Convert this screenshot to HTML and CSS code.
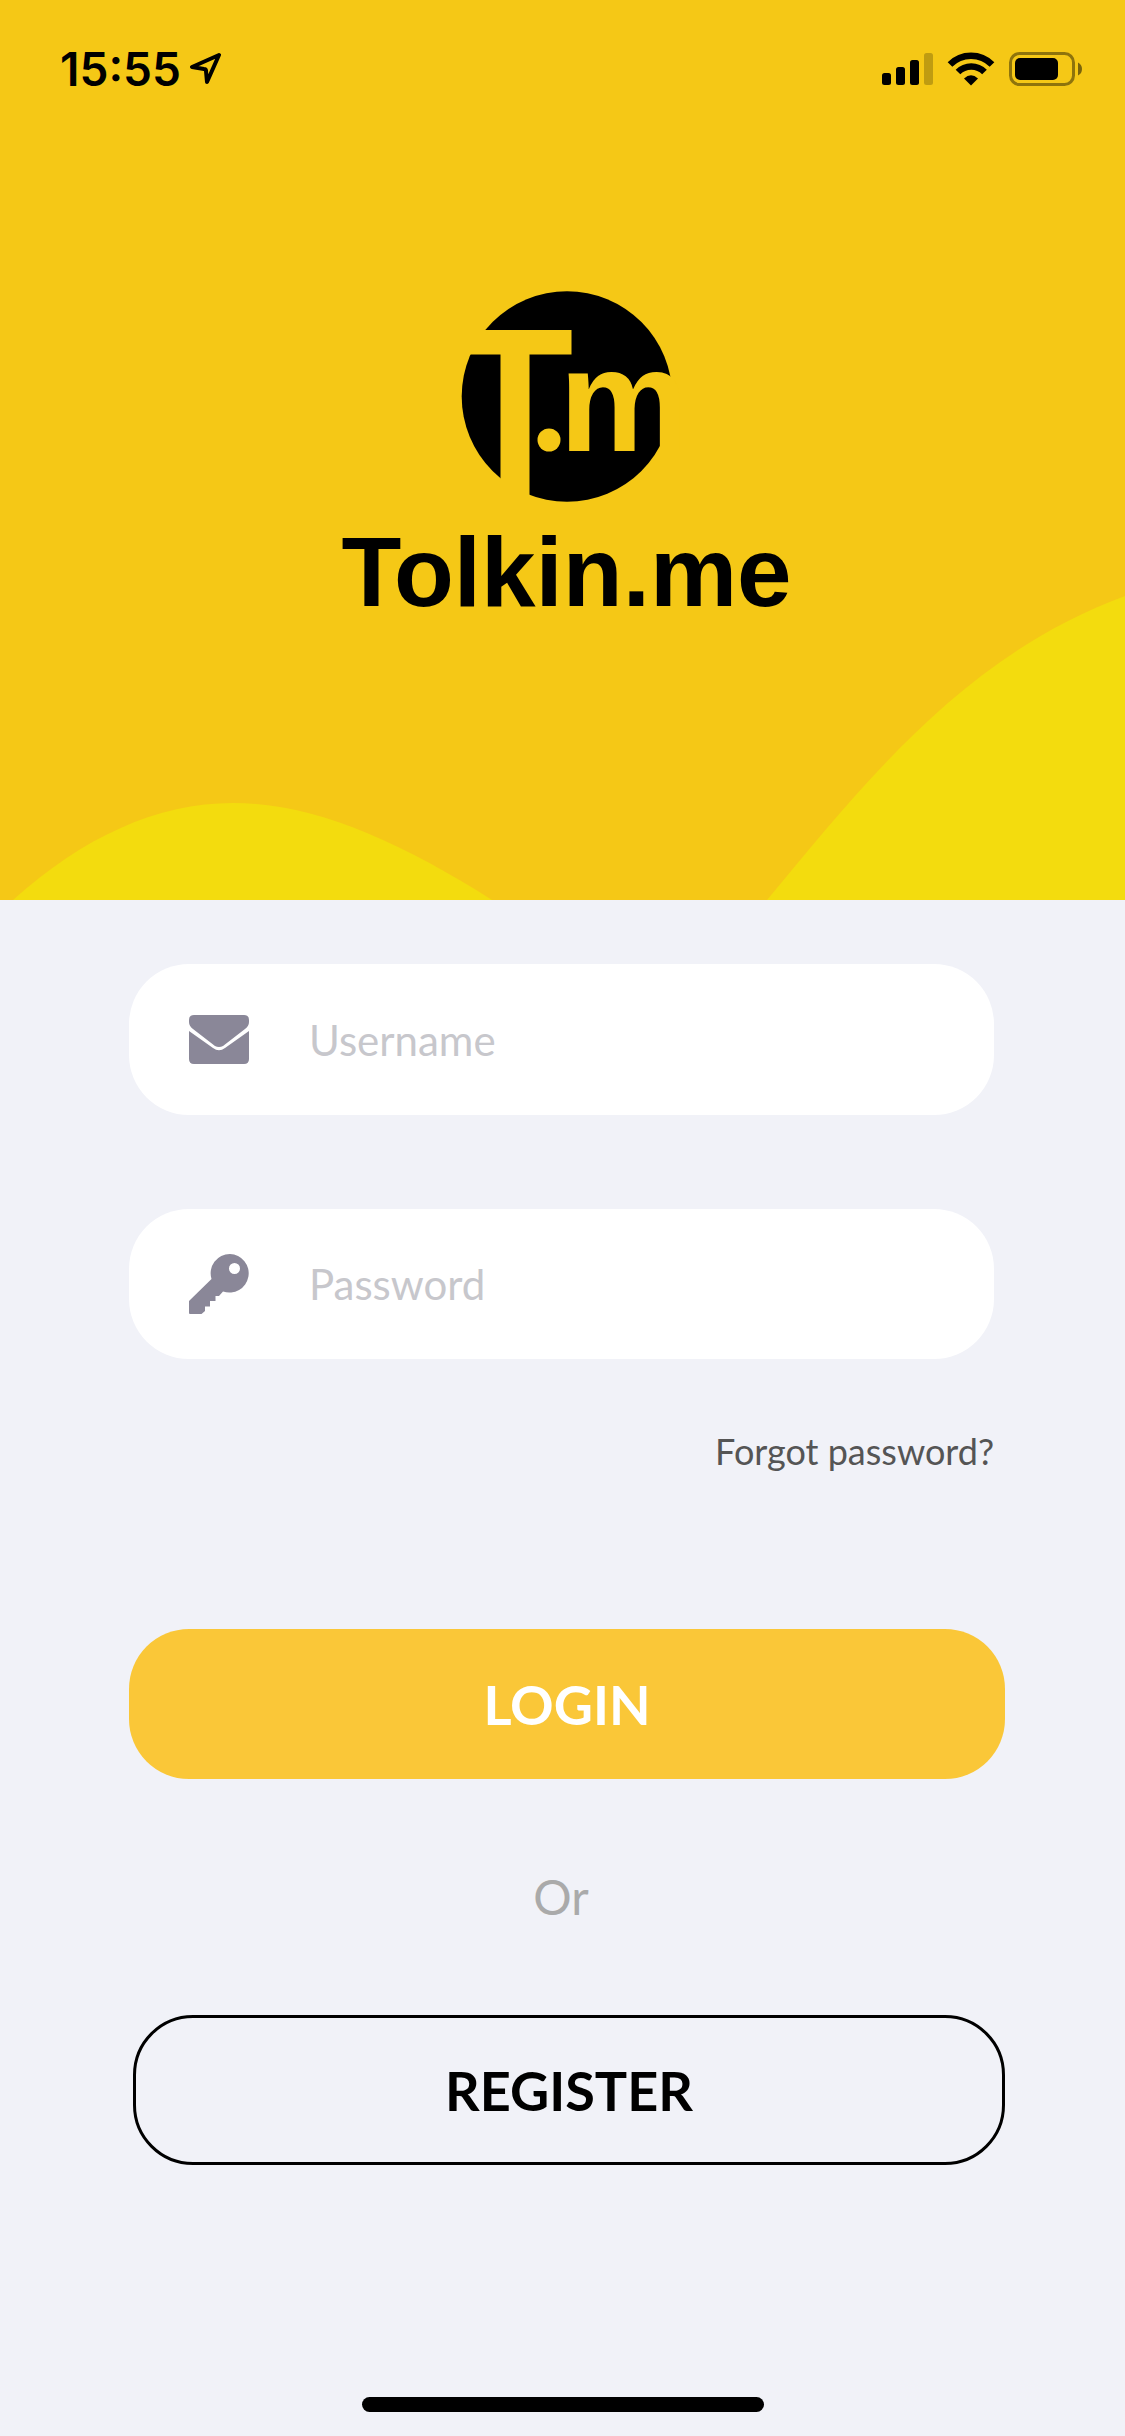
FILE: index.html
```html
<!DOCTYPE html>
<html lang="en">
<head>
<meta charset="utf-8">
<meta name="viewport" content="width=device-width, initial-scale=1">
<title>Tolkin.me</title>
<link rel="stylesheet" href="styles.css">
</head>
<body>
<div class="screen">
  <header class="hero">
    <svg class="hills" viewBox="0 0 1125 310" preserveAspectRatio="none" aria-hidden="true">
      <path d="M13 310C83 247 157 213 233 213C313 213 397 250 492 310Z"/>
      <path d="M767 310C865 192 965 65 1125 6V310Z"/>
    </svg>
    <div class="status">
      <div class="clock">
        <span>15:55</span>
        <svg width="32" height="34" viewBox="189 52 32 34" aria-hidden="true">
          <path d="M219 55L192 67L204 69Q206 69 206 71L207 82Z" fill="none" stroke="#000" stroke-width="4" stroke-linejoin="round"/>
        </svg>
      </div>
      <svg class="indicators" width="201" height="36" viewBox="882 51 201 36" aria-hidden="true">
        <rect x="882" y="73" width="9" height="12" rx="2.500"/>
        <rect x="896" y="67" width="9" height="18" rx="2.500"/>
        <rect x="910" y="60" width="9" height="25" rx="2.500"/>
        <rect x="924" y="53" width="9" height="32" rx="2.500" opacity=".22"/>
        <g fill="none" stroke="#000">
          <path d="M950 64.500A29.500 29.500 0 0 1 992 64.500" stroke-width="6.500"/>
          <path d="M958 72A18.500 18.500 0 0 1 984.500 72" stroke-width="6.500"/>
        </g>
        <path d="M964 78.500Q971 72 978 78.500L971 85.500Z"/>
        <rect x="1010.500" y="53.500" width="63" height="31" rx="9" fill="none" stroke="#000" stroke-width="3" opacity=".42"/>
        <rect x="1015" y="58" width="43" height="22" rx="5"/>
        <path d="M1078 62.500Q1082 64.500 1082 69Q1082 73.500 1078 75.500Z" opacity=".5"/>
      </svg>
    </div>
    <div class="brand">
      <svg class="mark" width="212" height="212" viewBox="461 291 212 212" aria-hidden="true">
        <circle cx="567" cy="396.500" r="105.300"/>
        <g class="cutout">
          <rect x="461" y="330" width="110.500" height="24.500"/>
          <rect x="500.500" y="350" width="29" height="153"/>
          <circle cx="549" cy="440" r="11.500"/>
          <text class="mark-letter" x="559" y="451">m</text>
        </g>
      </svg>
      <h1 class="wordmark">Tolkin.me</h1>
    </div>
  </header>

  <main>
    <form class="form">
      <label class="field username">
        <svg width="60" height="60" viewBox="0 0 60 60" aria-hidden="true">
          <path d="M5 5H55Q60 5 60 10V12Q60 16 56 19L34 36Q30 38 26 36L4 19Q0 16 0 12V10Q0 5 5 5Z"/>
          <path d="M0 21L24 38Q30 42.500 36 38L60 21V49Q60 54 55 54H5Q0 54 0 49Z"/>
        </svg>
        <input type="text" placeholder="Username" aria-label="Username">
      </label>
      <label class="field password">
        <svg width="60" height="60" viewBox="0 0 60 60" aria-hidden="true">
          <path fill-rule="evenodd" d="M41 0A19.300 19.300 0 1 1 34 37.500L30 42H26.500V47H21V52.500H16V57L12.500 60H1Q0 60 0 59V47L22.500 25A19.300 19.300 0 0 1 41 0ZM45.500 9A5.500 5.500 0 1 0 45.500 20A5.500 5.500 0 1 0 45.500 9Z"/>
        </svg>
        <input type="password" placeholder="Password" aria-label="Password">
      </label>
      <a class="forgot" href="#forgot">Forgot password?</a>
      <button class="btn login" type="submit">LOGIN</button>
      <p class="or">Or</p>
      <button class="btn register" type="button">REGISTER</button>
    </form>
  </main>
  <div class="home-bar"></div>
</div>
</body>
</html>
```
FILE: styles.css
```css
* { box-sizing: border-box; }

body {
  margin: 0;
  background: #f1f2f8;
  color: #000;
  font-family: Lato, "Open Sans", sans-serif;
}

.screen {
  display: flex;
  flex-direction: column;
  min-height: 100vh;
  padding-bottom: 24px;
}

/* Yellow header */
.hero {
  position: relative;
  min-height: 900px;
  background: #f5c816;
}

.hills {
  position: absolute;
  left: 0;
  bottom: 0;
  width: 100%;
  height: 310px;
  fill: #f3dc0e;
}

.status {
  position: relative;
  display: flex;
  justify-content: space-between;
  align-items: center;
  height: 138px;
  padding: 0 42px 0 60px;
}

.clock {
  display: flex;
  align-items: center;
  gap: 8px;
  font: 600 46px/54px Inter, sans-serif;
}

.brand {
  position: relative;
  display: flex;
  flex-direction: column;
  align-items: center;
  gap: 16px;
  padding: 153px 0 0 8px;
}

.mark { overflow: visible; }

.cutout { fill: #f5c816; }

.mark-letter { font: bold 146px "Liberation Sans", Arial, sans-serif; }

.wordmark {
  margin: 0;
  font: bold 98px/106px "Liberation Sans", Arial, sans-serif;
}

/* Login form */
.form {
  display: flex;
  flex-direction: column;
  padding: 64px 120px 0 129px;
}

.field {
  display: flex;
  align-items: center;
  gap: 60px;
  height: 150px;
  margin-right: 11px;
  padding: 0 60px;
  border-radius: 60px;
  background: #fff;
}

.field svg {
  flex: none;
  fill: #8a8798;
}

.field input {
  flex: 1;
  min-width: 0;
  padding: 0;
  border: 0;
  outline: 0;
  background: none;
  color: #000;
  font: 42px/52px Lato, "Open Sans", sans-serif;
}

.field input::placeholder {
  color: #c7c7cc;
  opacity: 1;
}

.username {
  height: 151px;
  padding-top: 1px;
}

.password { margin-top: 94px; }

.forgot {
  align-self: flex-end;
  margin: 70px 11px 156px 0;
  color: #555;
  font-size: 36px;
  line-height: 44px;
  text-decoration: none;
}

.btn {
  height: 150px;
  padding: 2px 0 0;
  border: 0;
  border-radius: 60px;
  font: bold 54px/64px Lato, "Open Sans", sans-serif;
}

.login {
  background: #fac738;
  color: #fff;
}

.or {
  margin: 89px 12px 89px 0;
  color: #aaa;
  font-size: 48px;
  line-height: 58px;
  text-align: center;
}

.register {
  margin-left: 4px;
  border: 3px solid #000;
  background: none;
  color: #000;
}

.home-bar {
  align-self: center;
  width: 402px;
  height: 15px;
  margin-top: auto;
  border-radius: 8px;
  background: #000;
}
```
